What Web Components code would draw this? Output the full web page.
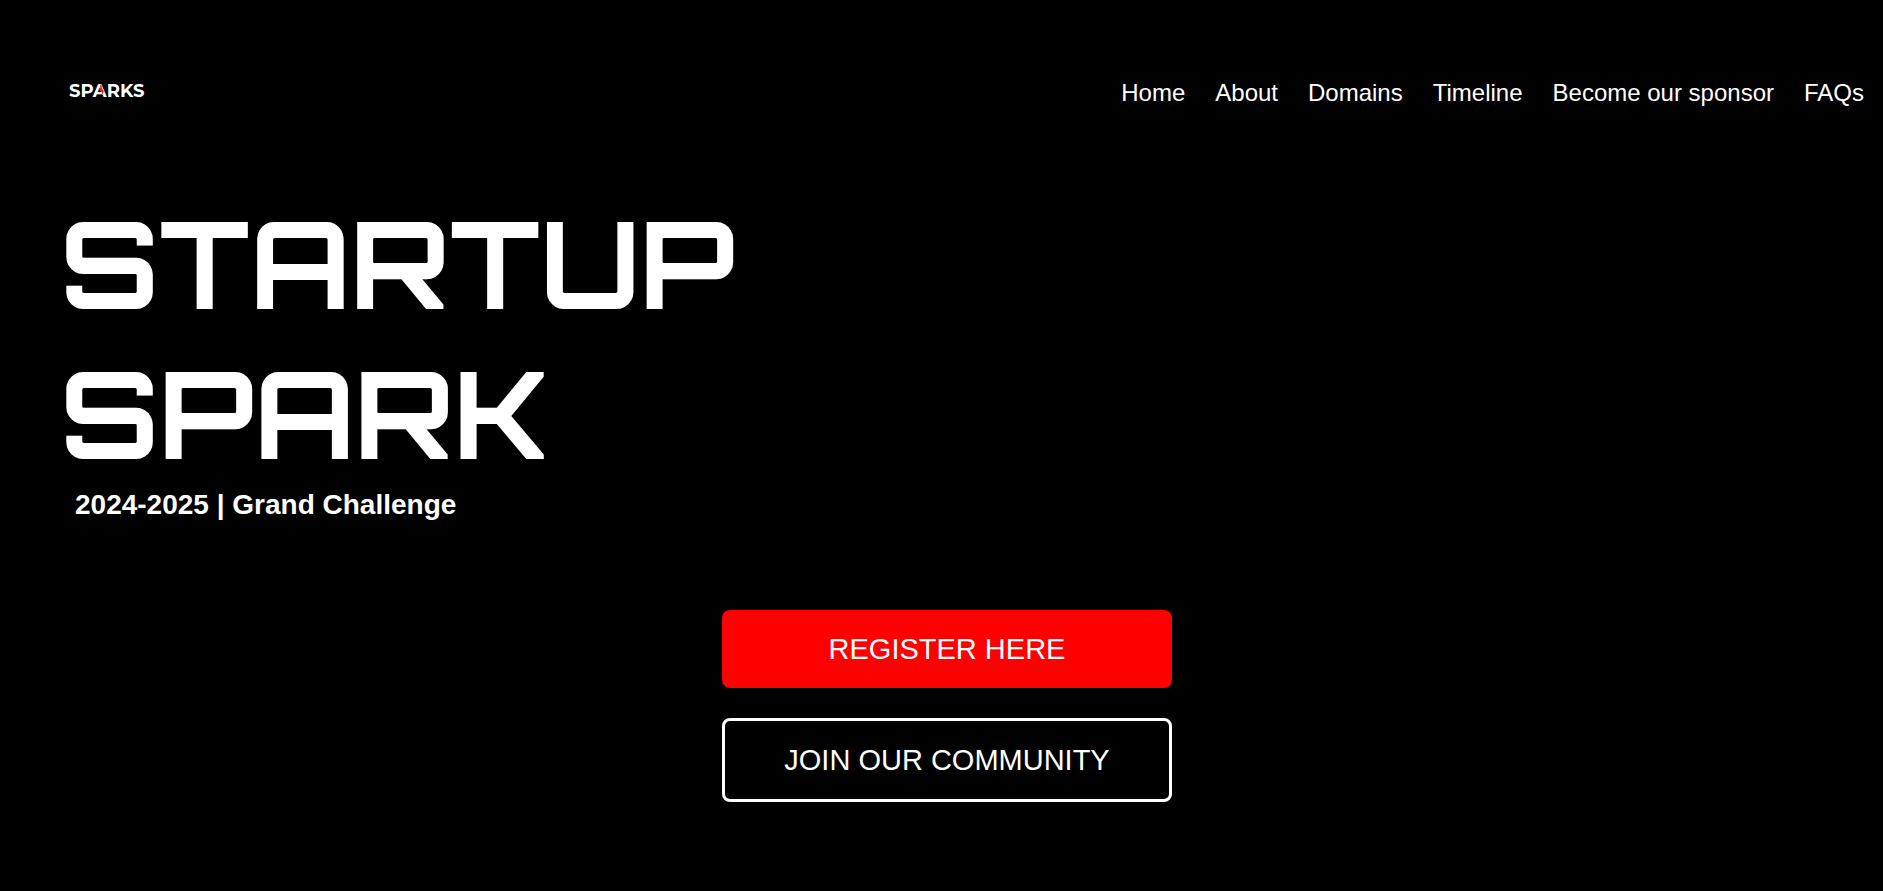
<!DOCTYPE html>
<html lang="en">
<head>
<meta charset="utf-8">
<meta name="viewport" content="width=device-width, initial-scale=1">
<title>Startup Spark</title>
<style>
  body { margin: 0; background: #000; color: #fff; font-family: "Liberation Sans", Arial, sans-serif; }
</style>
</head>
<body>
<spark-page>
  <spark-header slot="header">
    <spark-logo></spark-logo>
    <nav-link slot="nav" href="#home">Home</nav-link>
    <nav-link slot="nav" href="#about">About</nav-link>
    <nav-link slot="nav" href="#domains">Domains</nav-link>
    <nav-link slot="nav" href="#timeline">Timeline</nav-link>
    <nav-link slot="nav" href="#sponsor">Become our sponsor</nav-link>
    <nav-link slot="nav" href="#faqs">FAQs</nav-link>
  </spark-header>
  <spark-hero>
    <span slot="first">STARTUP</span>
    <span slot="second">SPARK</span>
    <span slot="tagline">2024-2025 | Grand Challenge</span>
  </spark-hero>
  <action-list>
    <action-button variant="primary">REGISTER HERE</action-button>
    <action-button variant="outline">JOIN OUR COMMUNITY</action-button>
  </action-list>
</spark-page>

<script>
  const define = (name, html, setup) => {
    const template = document.createElement('template');
    template.innerHTML = html;
    customElements.define(name, class extends HTMLElement {
      constructor() {
        super();
        this.attachShadow({ mode: 'open' }).append(template.content.cloneNode(true));
      }
      connectedCallback() { if (setup) setup(this, this.shadowRoot); }
    });
  };

  define('spark-page', `
    <style>
      :host { display: block; min-height: 100vh; background: #000; }
    </style>
    <slot name="header"></slot>
    <main><slot></slot></main>`);

  define('spark-header', `
    <style>
      :host { display: block; }
      header { display: flex; justify-content: space-between; align-items: flex-start; gap: 30px; padding: 79px 19px 0 69px; }
      nav { display: flex; flex-wrap: wrap; gap: 8px 30px; }
    </style>
    <header>
      <slot></slot>
      <nav aria-label="Main"><slot name="nav"></slot></nav>
    </header>`);

  define('spark-logo', `
    <style>
      :host { display: block; }
      a { display: block; color: #fff; text-decoration: none; font: 700 18px/24px Montserrat, Inter, sans-serif; }
      .a { position: relative; }
      svg { position: absolute; left: 5px; top: 4px; width: 6px; height: 11px; }
    </style>
    <a href="#home">SP<span class="a">A<svg viewBox="0 0 6 11" aria-hidden="true"><path d="M2 0 4 2.6 3.8 4.4 5.8 7 4.6 11 3.6 7.8 1.2 6 2.4 3.4z" fill="#e3262b"/></svg></span>RKS</a>`);

  define('nav-link', `
    <style>
      :host { display: block; }
      a { display: block; color: #fff; text-decoration: none; font-size: 24px; line-height: 28px; white-space: nowrap; }
      a:hover { color: #f00; }
    </style>
    <a><slot></slot></a>`,
    (host, root) => { root.querySelector('a').href = host.getAttribute('href'); });

  define('spark-hero', `
    <style>
      :host { display: block; padding: 81px 60px 0; }
      h1 { margin: 0; font: 700 120px/150px Orbitron, "DejaVu Sans", sans-serif; }
      h1 slot { display: block; }
      h2 { margin: 0; padding-left: 15px; font-size: 28px; line-height: 34px; }
    </style>
    <h1><slot name="first"></slot><slot name="second"></slot></h1>
    <h2><slot name="tagline"></slot></h2>`);

  define('action-list', `
    <style>
      :host { display: flex; flex-direction: column; align-items: center; gap: 30px; padding: 88px 0 40px 11px; }
    </style>
    <slot></slot>`);

  define('action-button', `
    <style>
      :host { display: block; width: 450px; max-width: 100%; }
      button { display: block; width: 100%; margin: 0; padding: 22px 20px; border: 0; border-radius: 8px; background: #f00; color: #fff; font-family: inherit; font-size: 29px; line-height: 34px; cursor: pointer; }
      :host([variant="outline"]) button { border: 3px solid #fff; background: transparent; }
    </style>
    <button type="button"><slot></slot></button>`);
</script>
</body>
</html>
